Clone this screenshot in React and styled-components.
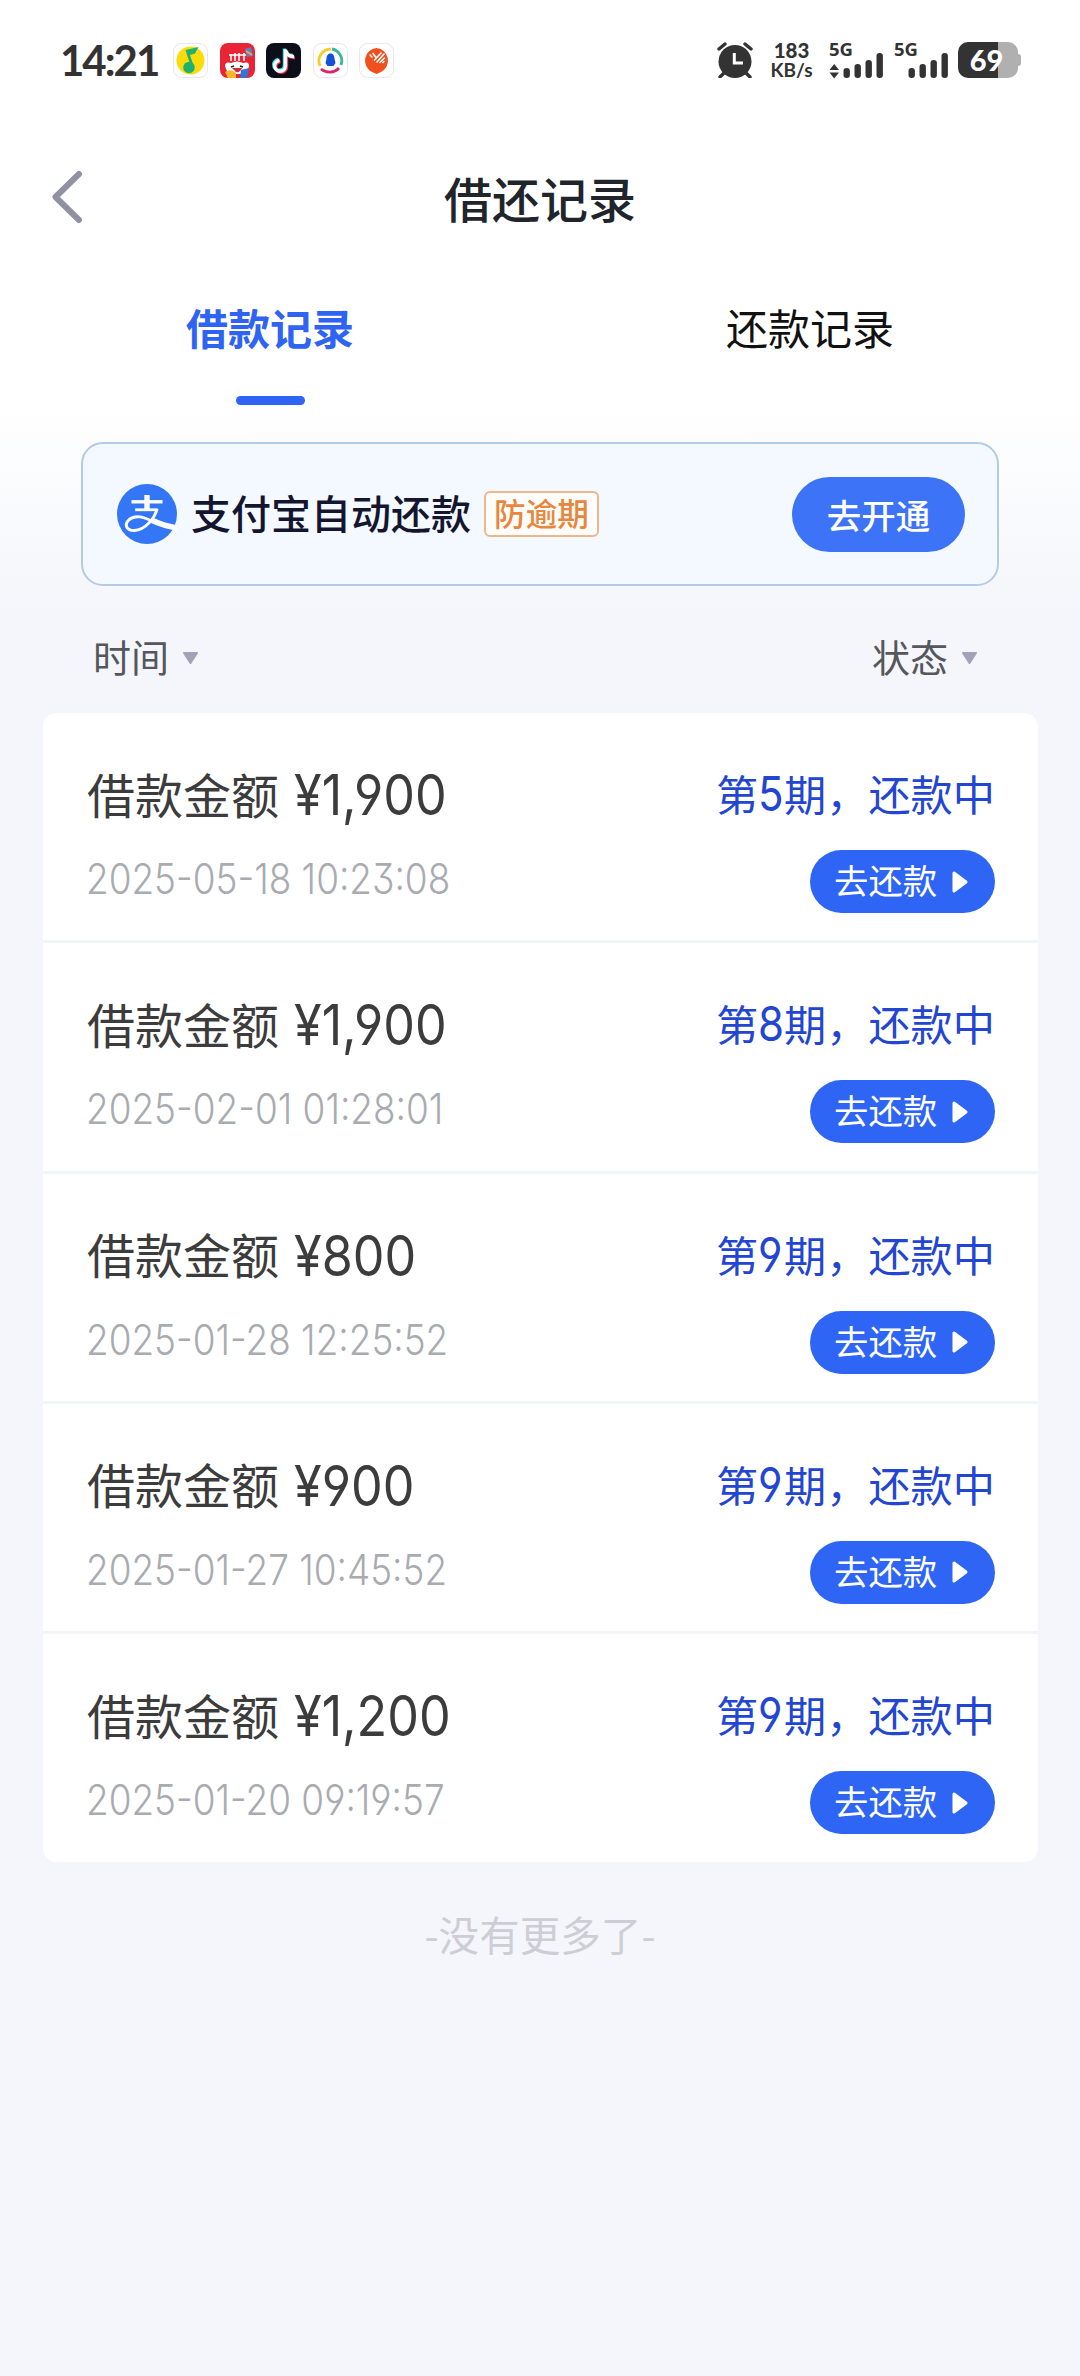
import React, { useState } from 'react';
import styled, { createGlobalStyle, css } from 'styled-components';

const GlobalStyle = createGlobalStyle`
    body {
        margin: 0;
        background: #f4f6fb;
        font-family: "Noto Sans CJK SC", "Noto Sans", sans-serif;
    }
`;

const PageBlock = styled.div`
    width: 1080px;
    min-height: 2376px;
    background: linear-gradient(#ffffff 0, #ffffff 400px, #f4f6fb 610px);
`;

/* status bar */
const StatusBar = styled.div`
    display: flex;
    justify-content: space-between;
    height: 36px;
    padding: 42px 62px 42px 60px;
    color: #333333;
`;

const StatusGroup = styled.div`
    display: flex;
    align-items: center;
`;

const Clock = styled.div`
    width: 113px;
    font-family: Lato, sans-serif;
    font-size: 42px;
    line-height: 34px;
    font-weight: 700;
    letter-spacing: -2px;
    white-space: nowrap;
`;

const AppIcon = styled.svg`
    width: 35px;
    height: 35px;
    margin-right: 11.6px;
`;

const Speed = styled.div`
    display: flex;
    flex-direction: column;
    align-items: center;
    width: 43px;
    margin-left: 17px;
    font-family: Lato, sans-serif;
    font-weight: 700;
    font-size: 19px;
    line-height: 20px;
    white-space: nowrap;
    span:first-child {
        font-size: 20.5px;
        font-weight: 900;
    }
`;

const Signal = styled.svg`
    width: 56px;
    height: 36px;
    margin-left: ${props => props.$gap}px;
    overflow: visible;
    font-family: "Noto Sans", sans-serif;
    font-weight: 700;
    font-size: 18.5px;
`;

const Battery = styled.div`
    position: relative;
    width: 60px;
    height: 36px;
    margin-left: 8px;
    border-radius: 10px;
    background: linear-gradient(90deg, #333333 40px, #b0b0b0 40px);
    color: #ffffff;
    font-family: Lato, sans-serif;
    font-size: 29px;
    font-weight: 900;
    line-height: 35px;
    text-align: center;
    text-indent: -3px;
    &::after {
        content: '';
        position: absolute;
        right: -3px;
        top: 12px;
        width: 3px;
        height: 12px;
        border-radius: 0 3px 3px 0;
        background: #b0b0b0;
    }
`;

/* header */
const Header = styled.header`
    display: grid;
    grid-template-columns: 100px 1fr 100px;
    align-items: center;
    height: 160px;
`;

const BackIcon = styled.svg`
    width: 36px;
    height: 56px;
    margin: -6px 0 0 49px;
`;

const Title = styled.h1`
    margin: -6px 0 0 0;
    font-size: 48px;
    font-weight: 500;
    line-height: 70px;
    text-align: center;
    color: #20242b;
`;

const Tabs = styled.nav`
    display: flex;
    height: 125px;
`;

const Tab = styled.div`
    flex: 1;
    display: flex;
    flex-direction: column;
    align-items: center;
    padding-top: 17px;
    font-size: 42px;
    line-height: 60px;
    color: #111111;
    ${props => props.$active && css`
        color: #2f63f3;
        font-weight: 700;
        &::after {
            content: '';
            width: 69px;
            height: 9px;
            margin-top: 39px;
            border-radius: 5px;
            background: #2f63f3;
        }
    `}
`;

/* banner */
const Banner = styled.section`
    display: flex;
    align-items: center;
    box-sizing: border-box;
    width: 918px;
    height: 144px;
    margin: 37px 0 0 81px;
    padding: 0 32px 0 34px;
    border: 2px solid #b3cbe9;
    border-radius: 22px;
    background: #f4f8ff;
`;

const AlipayIcon = styled.svg`
    width: 60px;
    height: 60px;
`;

const BannerText = styled.div`
    margin: -4px 0 0 14px;
    font-size: 40px;
    font-weight: 500;
    line-height: 60px;
    color: #14162f;
    white-space: nowrap;
`;

const Tag = styled.div`
    box-sizing: border-box;
    width: 115px;
    height: 46px;
    margin-left: 13px;
    border: 2px solid #edb78c;
    border-radius: 6px;
    background: #fffdfb;
    color: #e8873b;
    font-size: 31.6px;
    font-weight: 500;
    line-height: 39px;
    text-align: center;
`;

const OpenButton = styled.button`
    width: 173px;
    height: 75px;
    margin-left: auto;
    padding: 0;
    border: 0;
    border-radius: 38px;
    background: #3d73f6;
    color: #ffffff;
    font-family: inherit;
    font-size: 34.5px;
    font-weight: 500;
    line-height: 70px;
`;

/* filters */
const Filters = styled.div`
    display: flex;
    justify-content: space-between;
    height: 60px;
    margin-top: 42px;
    padding: 0 102px 0 93px;
`;

const Filter = styled.div`
    display: flex;
    align-items: center;
    gap: 13px;
    font-size: 38px;
    color: #55575c;
    span {
        margin-top: -5px;
        line-height: 56px;
    }
    svg {
        width: 17px;
        height: 13px;
    }
`;

/* records */
const RecordList = styled.div`
    width: 995px;
    margin: 25px 0 0 43px;
    border-radius: 14px;
    background: #ffffff;
`;

const Record = styled.div`
    display: grid;
    grid-template-columns: 1fr auto;
    grid-template-rows: 70px 63px;
    row-gap: 20px;
    height: 180.3px;
    padding: 47px 43px 0 44px;
    border-bottom: 3px solid #f3f4f6;
    &:last-child {
        height: 181px;
        border-bottom: 0;
    }
`;

const numberFont = css`
    font-family: Inter, sans-serif;
    font-feature-settings: "cv04", "cv09";
    transform: scaleX(0.875);
    transform-origin: left;
    white-space: nowrap;
`;

const Amount = styled.div`
    display: flex;
    align-items: center;
    font-size: 48px;
    line-height: 64px;
    color: #3c3c3c;
    em {
        margin-top: -5px;
        font-style: normal;
    }
    span {
        ${numberFont}
        margin-left: 15px;
        font-size: 56.5px;
        font-weight: 400;
        transform: scaleX(0.89);
    }
`;

const Period = styled.div`
    font-size: 42.2px;
    line-height: 66px;
    text-align: right;
    color: #2346d2;
    span {
        ${numberFont}
        display: inline-block;
        width: 26px;
        font-size: 48px;
        font-weight: 400;
    }
`;

const DateText = styled.div`
    ${numberFont}
    margin-left: -1px;
    font-size: 42.2px;
    font-weight: 350;
    line-height: 58px;
    color: #a9abb1;
`;

const RepayButton = styled.button`
    justify-self: end;
    display: flex;
    align-items: center;
    justify-content: space-between;
    width: 185px;
    height: 63px;
    padding: 0 26px 0 24px;
    border: 0;
    border-radius: 32px;
    background: #2e65f5;
    color: #ffffff;
    font-family: inherit;
    font-size: 34.4px;
    span {
        margin-top: -5px;
        line-height: 60px;
    }
    svg {
        width: 18px;
        height: 24px;
    }
`;

const NoMore = styled.div`
    margin-top: 44px;
    font-size: 40.6px;
    line-height: 56px;
    text-align: center;
    color: #cdced5;
`;

const records = [
    { id: 1, amount: '1,900', date: '2025-05-18 10:23:08', period: 5 },
    { id: 2, amount: '1,900', date: '2025-02-01 01:28:01', period: 8 },
    { id: 3, amount: '800', date: '2025-01-28 12:25:52', period: 9 },
    { id: 4, amount: '900', date: '2025-01-27 10:45:52', period: 9 },
    { id: 5, amount: '1,200', date: '2025-01-20 09:19:57', period: 9 },
];

const AppIcons = () => (
    <>
        <AppIcon viewBox="0 0 35 35">
            <rect x=".5" y=".5" width="34" height="34" rx="8" fill="#fff" stroke="#e6e6ec" />
            <circle cx="17.5" cy="17.5" r="14" fill="#fbdc0a" />
            <path d="M12.5 7 L25.5 4 L22 10.5 L17 12 L21 24 L18 24 Z" fill="#20b070" />
            <circle cx="16" cy="24.5" r="5.8" fill="#20b070" />
        </AppIcon>
        <AppIcon viewBox="0 0 35 35">
            <rect width="35" height="35" rx="8" fill="#ea2335" />
            <path d="M25 6 L31 4 L33 13 L27 14 Z" fill="#5a83c8" />
            <path d="M26 8 L32 12" stroke="#f4a340" strokeWidth="2" />
            <path d="M11 11 V18 M15 10 V18 M19 10 V18 M24 10 V18 M9 12 H26" stroke="#fff" strokeWidth="1.6" />
            <path d="M5 23 Q5 18 11 20 Q17 17 23 20 Q30 18 29 24 L25 31 H8 Z" fill="#fff" />
            <path d="M11 24 L14 23 M20 23 L23 24" stroke="#222" strokeWidth="1.5" />
            <path d="M12 25 H22 Q20 30 16 29 Z" fill="#d62836" />
            <path d="M5 29 Q11 25 16 30 V35 H8 Z" fill="#f6b52b" />
            <path d="M21 27 L29 25 L27 35 H20 Z" fill="#3374d9" />
        </AppIcon>
        <AppIcon viewBox="0 0 35 35">
            <rect width="35" height="35" rx="8" fill="#0c0f1a" />
            <g fill="none" strokeWidth="3.4">
                <path d="M18.5 5.5 V22 A5.4 5.4 0 1 1 12.5 16.5 M19 7 Q21 13 27 12.5" stroke="#2ce5e2" />
                <path d="M20.5 7.5 V24 A5.4 5.4 0 1 1 14.5 18.5 M21 9 Q23 15 29 14.5" stroke="#f52c56" />
                <path d="M19.5 6.5 V23 A5.4 5.4 0 1 1 13.5 17.5 M20 8 Q22 14 28 13.5" stroke="#fff" />
            </g>
        </AppIcon>
        <AppIcon viewBox="0 0 35 35">
            <rect x=".5" y=".5" width="34" height="34" rx="8" fill="#fff" stroke="#e6e6ec" />
            <g fill="none" strokeWidth="2.8">
                <path d="M7 23 A12 12 0 0 1 18 6" stroke="#f7cb2d" />
                <path d="M19 6 A12 12 0 0 1 28 22" stroke="#36b79b" />
                <path d="M8 26 A13 13 0 0 0 26 25" stroke="#dc2365" />
            </g>
            <path d="M17.5 10.5 C20.5 10.5 21.5 13 21.5 16 L22.5 20 L20.5 23 H14.5 L12.5 20 L13.5 16 C13.5 13 14.5 10.5 17.5 10.5Z" fill="#1450d8" />
        </AppIcon>
        <AppIcon viewBox="0 0 35 35">
            <rect x=".5" y=".5" width="34" height="34" rx="8" fill="#fff" stroke="#e6e6ec" />
            <path d="M17.5 5 A12.7 12.7 0 0 1 22 29 L17.5 31 L13 29 A12.7 12.7 0 0 1 17.5 5Z" fill="#f0501e" />
            <path d="M11 12 L13 14 M14 10.5 L17 14.5 M22 10 L15.5 17 M25 11 L18 19 M25.5 15 L21 19.5 M25 18.5 L24 19.5" stroke="#fff" strokeWidth="1.6" strokeLinecap="round" />
        </AppIcon>
    </>
);

const AlarmIcon = () => (
    <svg width="36" height="36" viewBox="0 0 36 36">
        <circle cx="18" cy="19.5" r="16.5" fill="#333" />
        <path d="M2 7 L8 2 M28 2 L34 7 M7 31 L3 35 M29 31 L33 35" stroke="#333" strokeWidth="3.4" strokeLinecap="round" />
        <path d="M17.3 11 V21 H26" fill="none" stroke="#fff" strokeWidth="3" />
    </svg>
);

const SignalIcon = ({ gap, arrows }) => (
    <Signal $gap={gap} viewBox="0 0 56 36" fill="#333">
        <text x="0" y="14" textLength="24" lengthAdjust="spacingAndGlyphs">5G</text>
        {arrows && <path d="M5.2 22 L10 28 H.5 Z M.5 30.5 H10 L5.2 36.5 Z" />}
        <rect x="14.5" y="26" width="6.4" height="10" rx="3" />
        <rect x="25.5" y="22" width="6.4" height="14" rx="3" />
        <rect x="36.5" y="18" width="6.4" height="18" rx="3" />
        <rect x="47.5" y="11" width="6.4" height="25" rx="3" />
    </Signal>
);

const DownIcon = () => (
    <svg viewBox="0 0 17 13">
        <path d="M2 1 H15 L8.5 11 Z" fill="#a3a2b6" stroke="#a3a2b6" strokeWidth="2" strokeLinejoin="round" />
    </svg>
);

const App = () => {
    const [tab, setTab] = useState('borrow');

    return (
        <PageBlock>
            <GlobalStyle />
            <StatusBar>
                <StatusGroup>
                    <Clock>14:21</Clock>
                    <AppIcons />
                </StatusGroup>
                <StatusGroup>
                    <AlarmIcon />
                    <Speed>
                        <span>183</span>
                        <span>KB/s</span>
                    </Speed>
                    <SignalIcon gap={16} arrows />
                    <SignalIcon gap={9} />
                    <Battery>69</Battery>
                </StatusGroup>
            </StatusBar>

            <Header>
                <BackIcon viewBox="0 0 36 56">
                    <path d="M30 5 L6.5 28 L30 51" fill="none" stroke="#9092a3" strokeWidth="6" strokeLinecap="round" strokeLinejoin="round" />
                </BackIcon>
                <Title>借还记录</Title>
            </Header>

            <Tabs>
                <Tab $active={tab === 'borrow'} onClick={() => setTab('borrow')}>借款记录</Tab>
                <Tab $active={tab === 'repay'} onClick={() => setTab('repay')}>还款记录</Tab>
            </Tabs>

            <Banner>
                <AlipayIcon viewBox="0 0 56 60" preserveAspectRatio="none">
                    <ellipse cx="28" cy="30" rx="28" ry="30" fill="#3477f6" />
                    <g fill="none" stroke="#fff">
                        <path d="M28 11 V26" strokeWidth="5" />
                        <path d="M13.5 17.8 H42.5" strokeWidth="3.4" />
                        <path d="M17 25.8 H38" strokeWidth="2.8" />
                        <path d="M37.5 25 C35 34 27 46 16 46.5 C8 46.5 7 40 11 36 C18 29 28 35 36 38.5" strokeWidth="2.8" />
                        <path d="M33 36.5 Q43 41.5 56 44" strokeWidth="5.5" />
                    </g>
                </AlipayIcon>
                <BannerText>支付宝自动还款</BannerText>
                <Tag>防逾期</Tag>
                <OpenButton>去开通</OpenButton>
            </Banner>

            <Filters>
                <Filter><span>时间</span><DownIcon /></Filter>
                <Filter><span>状态</span><DownIcon /></Filter>
            </Filters>

            <RecordList>
                {records.map(record => (
                    <Record key={record.id}>
                        <Amount><em>借款金额</em><span>¥{record.amount}</span></Amount>
                        <Period>第<span>{record.period}</span>期，还款中</Period>
                        <DateText>{record.date}</DateText>
                        <RepayButton>
                            <span>去还款</span>
                            <svg viewBox="0 0 18 24">
                                <path d="M3 3 L15 12 L3 21 Z" fill="#fff" stroke="#fff" strokeWidth="3" strokeLinejoin="round" />
                            </svg>
                        </RepayButton>
                    </Record>
                ))}
            </RecordList>

            <NoMore>-没有更多了-</NoMore>
        </PageBlock>
    );
};

export default App;
